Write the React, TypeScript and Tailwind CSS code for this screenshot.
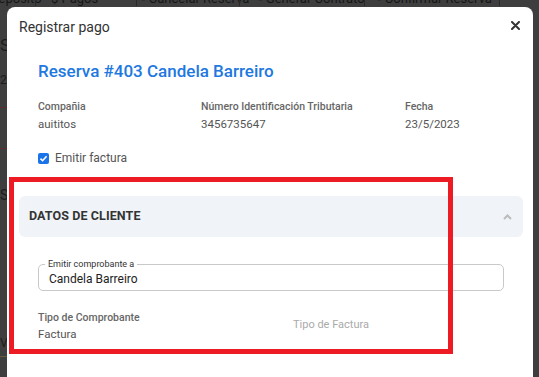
import React from "react";

export default function App() {
  return (
    <div
      className="relative w-[539px] h-[377px] overflow-hidden bg-[#3e3e3e]"
      style={{ fontFamily: "Roboto, 'Liberation Sans', sans-serif" }}
    >
      {/* background page (dimmed) */}
      <div className="h-[7px] overflow-hidden flex text-[13px] text-[#161616] leading-[14px]">
        <div className="-mt-[9px] flex items-center whitespace-nowrap">
          <span className="w-[45px] -ml-[10px] pl-[0px]">Depósito</span>
          <span className="w-px h-[14px] bg-[#2a2a2a]" />
          <span className="pl-[15px] w-[100px]">$ Pagos</span>
          <span className="w-px h-[14px] bg-[#2a2a2a]" />
          <span className="pl-[4px] w-[102px]">▪ Cancelar Reserva</span>
          <span className="w-px h-[14px] bg-[#2a2a2a]" />
          <span className="pl-[18px] w-[124px]">▪ Generar Contrato</span>
          <span className="w-px h-[14px] bg-[#2a2a2a]" />
          <span className="pl-[12px] w-[134px]">▪ Confirmar Reserva</span>
          <span className="w-px h-[14px] bg-[#2a2a2a]" />
        </div>
      </div>
      <div className="flex flex-col text-[#1c1c1c] w-[7px]">
        <div className="mt-[28px] text-[17px] leading-[20px] whitespace-nowrap">Se</div>
        <div className="mt-[16px] text-[12px] whitespace-nowrap">20</div>
        <div className="mt-[18px] h-px w-[7px] bg-[#5a2e2e]" />
        <div className="mt-[40px] h-px w-[7px] bg-[#5a2e2e]" />
        <div className="mt-[36px] text-[14px] whitespace-nowrap">S</div>
        <div className="mt-[128px] text-[12px] whitespace-nowrap">V</div>
        <div className="mt-[4px] h-px w-[7px] bg-[#6b5a3a]" />
      </div>

      {/* modal */}
      <div className="absolute left-[7px] top-[7px] w-[526px] h-[420px] rounded-lg bg-white">
        <div className="flex items-center justify-between pl-3 pr-[13px] pt-[11px]">
          <span className="text-[14px] leading-[18px] text-[#333]">Registrar pago</span>
          <svg width="9" height="9" viewBox="0 0 9 9" className="mt-[-3px]">
            <path d="M1 1L8 8M8 1L1 8" stroke="#333" strokeWidth="2" strokeLinecap="round" />
          </svg>
        </div>

        <div className="pl-[31px] pt-[24px] text-[17px] leading-[22px] font-medium text-[#2178e0]">
          Reserva #403 Candela Barreiro
        </div>

        <div className="grid grid-cols-[163px_204px_1fr] pl-[31px] pt-[18px]">
          <div className="flex flex-col">
            <span className="text-[10.5px] leading-[14px] font-medium text-[#666]">Compañia</span>
            <span className="mt-[3px] text-[11.5px] leading-[14px] text-[#555]">auititos</span>
          </div>
          <div className="flex flex-col">
            <span className="text-[10.5px] leading-[14px] font-medium text-[#666]">
              Número Identificación Tributaria
            </span>
            <span className="mt-[3px] text-[11.5px] leading-[14px] text-[#555]">3456735647</span>
          </div>
          <div className="flex flex-col">
            <span className="text-[10.5px] leading-[14px] font-medium text-[#666]">Fecha</span>
            <span className="mt-[3px] text-[11.5px] leading-[14px] text-[#555]">23/5/2023</span>
          </div>
        </div>

        <div className="flex items-center pl-[31px] pt-[20px]">
          <span className="w-[11px] h-[11px] rounded-[2px] bg-[#1a73e8] flex items-center justify-center">
            <svg width="9" height="9" viewBox="0 0 9 9">
              <path d="M1.5 4.6L3.6 6.7L7.6 2.3" stroke="#fff" strokeWidth="1.6" fill="none" />
            </svg>
          </span>
          <span className="ml-[6px] text-[12px] leading-[14px] text-[#555]">Emitir factura</span>
        </div>

        <div className="ml-3 mr-[10px] mt-[31px]">
          <div className="h-[41px] rounded-md bg-[#f0f3f7] flex items-center justify-between pl-[10px] pr-[10px]">
            <span className="text-[12.5px] font-bold text-[#333] tracking-[0.1px]">DATOS DE CLIENTE</span>
            <svg width="9" height="6" viewBox="0 0 9 6" className="mr-[1px]">
              <path d="M1 5L4.5 1.5L8 5" stroke="#bbb" strokeWidth="2" fill="none" />
            </svg>
          </div>

          <div className="px-[19px] pt-[27px]">
            <div className="relative h-[27px] rounded-[5px] border border-[#c9c9c9] flex items-center pl-[10px]">
              <span className="absolute left-[6px] -top-[7px] bg-white px-[3px] text-[9px] leading-[12px] text-[#333]">
                Emitir comprobante a
              </span>
              <span className="text-[12px] text-[#222] mt-[2px]">Candela Barreiro</span>
            </div>

            <div className="grid grid-cols-[255px_1fr] pt-[20px]">
              <div className="flex flex-col">
                <span className="text-[10.5px] leading-[14px] font-medium text-[#666]">Tipo de Comprobante</span>
                <span className="mt-[2px] text-[11.5px] leading-[14px] text-[#555]">Factura</span>
              </div>
              <div className="pt-[0px]">
                <span className="text-[11px] leading-[14px] text-[#aaa]">Tipo de Factura</span>
              </div>
            </div>
          </div>
        </div>
      </div>

      {/* red annotation box */}
      <div className="absolute left-[9px] top-[177px] w-[444px] h-[177px] border-[5px] border-[#ed1c24]" />
    </div>
  );
}
